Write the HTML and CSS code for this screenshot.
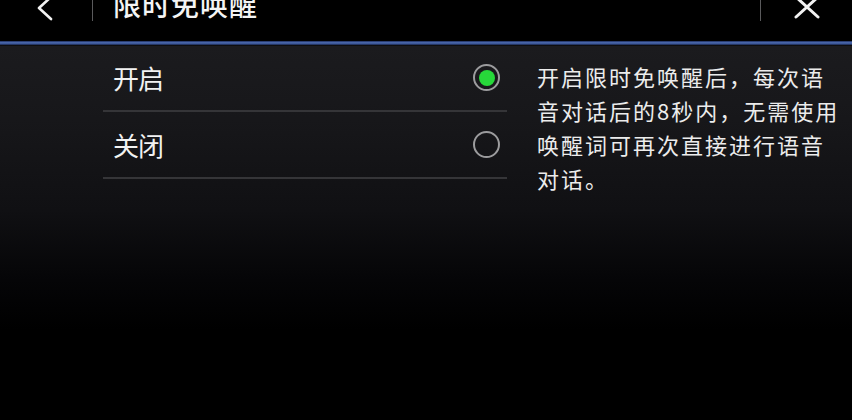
FILE: index.html
```html
<!DOCTYPE html>
<html lang="zh-CN">
<head>
<meta charset="utf-8">
<title>限时免唤醒</title>
<link rel="stylesheet" href="styles.css">
</head>
<body>
<div class="screen">
  <header class="header">
    <div class="back">
      <svg class="icon-back" width="92" height="41" viewBox="0 0 92 41">
        <path d="M51 -3 L39 8 L51 19" fill="none" stroke="#f2f2f2" stroke-width="2.6" stroke-linecap="round" stroke-linejoin="round"/>
      </svg>
    </div>
    <div class="sep"></div>
    <div class="title">限时免唤醒</div>
    <div class="sep sep-right"></div>
    <div class="close">
      <svg class="icon-close" width="91" height="41" viewBox="0 0 91 41">
        <path d="M35 -3 L57 17 M57 -3 L35 17" fill="none" stroke="#f2f2f2" stroke-width="3" stroke-linecap="round"/>
      </svg>
    </div>
  </header>
  <div class="accent"></div>
  <main class="content">
    <div class="list">
      <div class="row">
        <span class="label">开启</span>
        <span class="radio on"><span class="dot"></span></span>
      </div>
      <div class="row">
        <span class="label">关闭</span>
        <span class="radio"></span>
      </div>
    </div>
    <p class="desc">开启限时免唤醒后，每次语音对话后的8秒内，无需使用唤醒词可再次直接进行语音对话。</p>
  </main>
</div>
</body>
</html>
```

FILE: styles.css
```css
html, body {
  margin: 0;
  padding: 0;
  background: #000;
}
body {
  font-family: "Noto Sans CJK SC", "Noto Sans", sans-serif;
  color: #f2f2f2;
}
.screen {
  width: 852px;
  height: 420px;
  overflow: hidden;
  display: flex;
  flex-direction: column;
  background: linear-gradient(180deg, #000 0, #000 45px, #1b1b1e 46px, #17171a 120px, #101013 210px, #050507 280px, #000 330px);
}
.header {
  height: 41px;
  display: flex;
  align-items: flex-start;
  background: #000;
  flex: none;
}
.back {
  width: 92px;
  height: 41px;
}
.icon-back, .icon-close {
  display: block;
  overflow: visible;
}
.sep {
  width: 1px;
  height: 21px;
  background: #5a5a5c;
}
.title {
  flex: 1;
  padding-left: 20px;
  font-size: 28px;
  line-height: 28px;
  margin-top: -10px;
  letter-spacing: 1px;
  font-weight: 500;
  color: #f4f4f4;
}
.close {
  width: 91px;
  height: 41px;
}
.accent {
  height: 4px;
  flex: none;
  background: linear-gradient(180deg, #1c2b58 0, #4a68ad 40%, #3a5595 70%, #162040 100%);
}
.content {
  display: flex;
  align-items: flex-start;
  padding-left: 103px;
}
.list {
  width: 404px;
}
.row {
  height: 65px;
  border-bottom: 2px solid #353538;
  display: flex;
  align-items: center;
  justify-content: space-between;
  padding: 0 7px 0 10px;
}
.label {
  font-size: 26px;
  letter-spacing: -1px;
  color: #f2f2f2;
}
.radio {
  width: 23px;
  height: 23px;
  border: 2px solid #9c9c9e;
  border-radius: 50%;
  display: flex;
  align-items: center;
  justify-content: center;
}
.radio .dot {
  width: 16px;
  height: 16px;
  border-radius: 50%;
  background: #27d83a;
}
.desc {
  margin: 14px 0 0 30px;
  width: 306px;
  font-size: 22px;
  line-height: 34px;
  letter-spacing: 2px;
  color: #ececec;
}
```
